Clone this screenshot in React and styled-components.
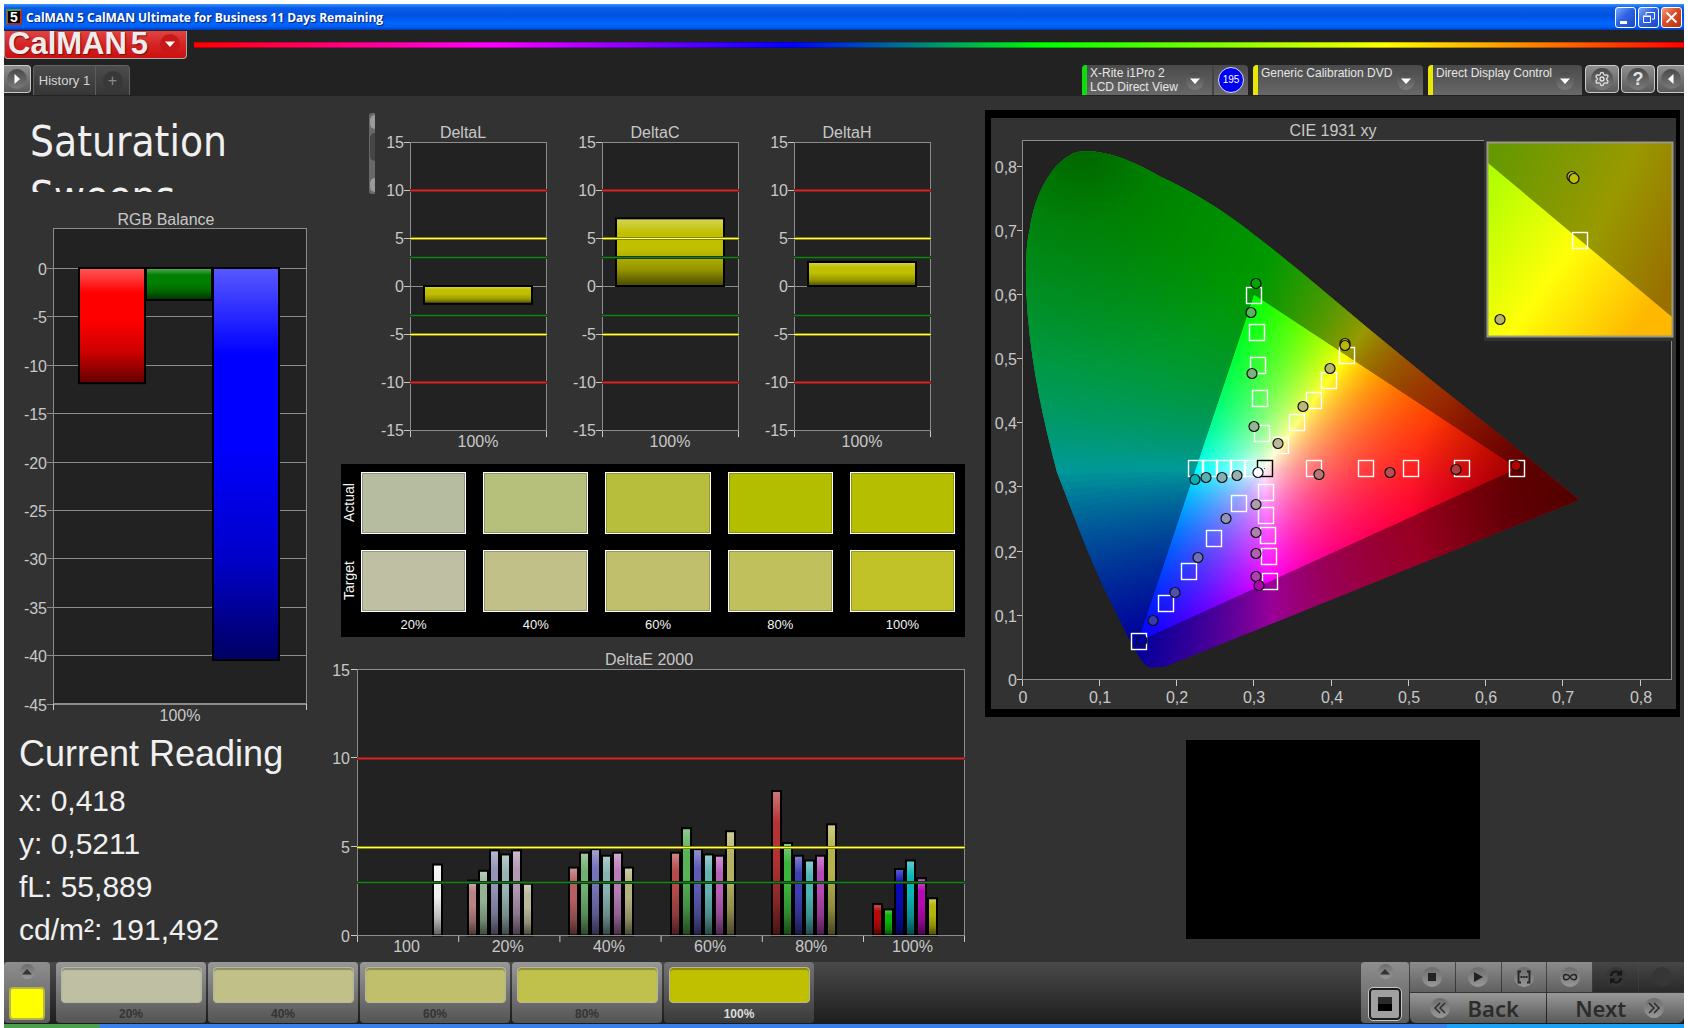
import React from "react";
import styled, { createGlobalStyle, css } from "styled-components";
import { Settings } from "lucide-react";

const GlobalStyle = createGlobalStyle`
  * {
    box-sizing: border-box;
  }
  body {
    margin: 0;
    background: #fff;
    color: #c8c8c8;
    font-family: "Liberation Sans", Arial, sans-serif;
    font-size: 16px;
  }
  button {
    font: inherit;
    color: inherit;
    border: 0;
    padding: 0;
    cursor: pointer;
  }
`;

const Window = styled.div`
  padding: 4px 4px 0;
`;

/* ---------- title bar ---------- */

const TitleBar = styled.header`
  display: flex;
  align-items: center;
  height: 26px;
  padding: 0 2px;
  background: linear-gradient(#3b94ff, #0a5ce8 15%, #0053e0 45%, #0066ff 75%, #0060f4 88%, #0038b8);
`;

const AppIcon = styled.span`
  width: 16px;
  height: 16px;
  margin-right: 4px;
  border: 2px solid;
  border-color: #4c9a4c #b02a2a #b02a2a #7a6a3a;
  background: #000;
  color: #fff;
  font-size: 14px;
  font-weight: 700;
  line-height: 12px;
  text-align: center;
`;

const WindowTitle = styled.h1`
  flex: 1;
  margin: 0;
  color: #fff;
  font-family: "Open Sans", "Noto Sans", sans-serif;
  font-size: 12px;
  font-weight: 700;
  text-shadow: 1px 1px 1px #0a1e7a;
`;

const WindowButtons = styled.div`
  display: flex;
  gap: 2px;
`;

const WindowButton = styled.button`
  display: flex;
  width: 21px;
  height: 21px;
  border: 1px solid #fff;
  border-radius: 3px;
  background: ${({ $close }) =>
    $close
      ? "linear-gradient(135deg, #f0a080, #dd4a22 45%, #b83010)"
      : "linear-gradient(135deg, #7ea6f6, #2e62e4 45%, #1a48c8)"};
`;

/* ---------- header ---------- */

const Header = styled.div`
  height: 66px;
  padding-top: 1px;
  background: #222;
`;

const BrandRow = styled.div`
  display: flex;
  height: 34px;
`;

const BrandButton = styled.button`
  display: flex;
  align-items: center;
  gap: 4px;
  width: 183px;
  height: 28px;
  padding: 0 6px 2px 3px;
  border: 1px solid #a8a8a8;
  border-top: 0;
  border-radius: 0 0 4px 4px;
  background: linear-gradient(#e04444, #d42424 50%, #cc1010);
  color: #ececec;
  font-size: 31px;
  font-weight: 700;
  line-height: 24px;
  text-shadow: 1px 1px 1px #7a0c0c;
`;

const Spectrum = styled.div`
  flex: 1;
  height: 6px;
  margin: 11px 0 0 7px;
  background: linear-gradient(#0006, transparent 20%, transparent 75%, #0007),
    linear-gradient(to right, #f00, #f0f 20%, #00f 40%, #0f0 57%, #ff0 80%, #f00);
`;

const TabRow = styled.div`
  display: flex;
  height: 31px;
`;

const iconPanel = css`
  border: 1px solid #c8c8c8;
  background: linear-gradient(#8e8e8e, #5a5a5a);
`;

const RoundIcon = styled.span`
  display: flex;
  align-items: center;
  justify-content: center;
  flex: none;
  width: ${({ $size = 20 }) => $size}px;
  height: ${({ $size = 20 }) => $size}px;
  margin-left: ${({ $push }) => ($push ? "auto" : "0")};
  border-radius: 50%;
  background: ${({ $tone = "linear-gradient(#4a4a4a, #7a7a7a)" }) => $tone};
`;

const SideButton = styled.button`
  ${iconPanel}
  display: flex;
  align-items: center;
  justify-content: center;
  width: 27px;
  height: 28px;
  border-left: ${({ $edge }) => ($edge === "left" ? 0 : "1px solid #c8c8c8")};
  border-right: ${({ $edge }) => ($edge === "right" ? 0 : "1px solid #c8c8c8")};
  border-radius: ${({ $edge }) => ($edge === "left" ? "0 4px 4px 0" : "4px 0 0 4px")};
`;

const ToolButton = styled.button`
  ${iconPanel}
  display: flex;
  align-items: center;
  justify-content: center;
  width: 34px;
  height: 28px;
  border-radius: 4px;
  color: #e4e4e4;
  font-size: 18px;
  font-weight: 700;
`;

const HistoryTabs = styled.div`
  display: flex;
  width: 97px;
  height: 30px;
  margin-left: 2px;
  border: 1px solid #626262;
  border-bottom: 0;
  border-radius: 4px 4px 0 0;
  background: linear-gradient(#4c4c4c, #363636);
`;

const HistoryTab = styled.button`
  width: 62px;
  border-right: 1px solid #5c5c5c;
  background: none;
  color: #d4d4d4;
  font-size: 13px;
`;

const AddTab = styled.button`
  display: flex;
  flex: 1;
  align-items: center;
  justify-content: center;
  background: none;
  color: #8a8a8a;
  font-size: 16px;
`;

const Devices = styled.div`
  display: flex;
  margin-left: auto;
  gap: 5px;
`;

const Tools = styled.div`
  display: flex;
  gap: 2px;
  margin-left: 3px;
`;

const Device = styled.div`
  display: flex;
  width: ${({ $width }) => $width}px;
  height: 30px;
  overflow: hidden;
  border-radius: 4px 4px 0 0;
  background: linear-gradient(#4a4a4a, #686868);
`;

const DeviceButton = styled.button`
  display: flex;
  flex: 1;
  align-items: flex-start;
  padding: 1px 0 0 3px;
  border-left: 5px solid ${({ $status }) => $status};
  background: none;
  color: #e6e6e6;
  font-size: 12px;
  line-height: 14px;
  text-align: left;
  white-space: nowrap;

  ${RoundIcon} {
    margin-top: 6px;
    margin-right: 8px;
  }
`;

const Countdown = styled.span`
  display: flex;
  align-items: center;
  justify-content: center;
  width: 36px;
  border-left: 2px solid #444;

  span {
    width: 26px;
    height: 26px;
    border: 1px solid #dcdcff;
    border-radius: 50%;
    background: #0000f4;
    color: #fff;
    font-size: 10px;
    line-height: 24px;
    text-align: center;
  }
`;

/* ---------- workspace ---------- */

const Workspace = styled.main`
  display: grid;
  grid-template-columns: 329fr 632fr 719fr;
  padding-bottom: 8px;
  background: #323232;
`;

const Column = styled.section`
  display: flex;
  flex-direction: column;
  min-width: 0;
`;

const CieColumn = styled(Column)`
  padding: 14px 4px 0 20px;
`;

const PageTitle = styled.h2`
  height: 96px;
  margin: 0 0 12px;
  padding: 18px 60px 0 26px;
  overflow: hidden;
  color: #f0f0f0;
  font-family: "DejaVu Sans Condensed", "Noto Sans", sans-serif;
  font-size: 42px;
  font-weight: 400;
  line-height: 55px;
`;

const Chart = styled.svg`
  display: block;
  width: 100%;
  height: auto;
  fill: #c8c8c8;
  font-size: 16px;
`;

const Reading = styled.div`
  padding: 2px 0 0 15px;
  color: #f0f0f0;
  font-size: 30px;
  line-height: 43px;

  h3 {
    margin: 0 0 3px;
    font-size: 36px;
    font-weight: 400;
    line-height: 44px;
  }
  p {
    margin: 0;
  }
`;

const DeltaRow = styled.div`
  display: flex;
  padding: 17px 29px 0 36px;
`;

const ScrollStub = styled.div`
  display: flex;
  flex-direction: column;
  justify-content: space-between;
  width: 6px;
  height: 81px;
  padding: 2px 0 2px 1px;
  border-radius: 3px 0 0 3px;
  background: #686868;

  i {
    height: 14px;
    border-radius: 6px 0 0 6px;
    background: #9a9a9a;
  }
  i:nth-child(2) {
    height: 28px;
    margin-bottom: 14px;
    background: #454545;
  }
`;

const DeltaCharts = styled.div`
  display: grid;
  flex: 1;
  grid-template-columns: repeat(3, 1fr);
  gap: 15px;
  padding-top: 7px;
`;

const SwatchTable = styled.table`
  display: block;
  margin: 12px 0 11px 8px;
  padding: 8px 0 0;
  border-spacing: 0;
  background: #000;
  color: #f4f4f4;

  thead,
  tbody {
    display: block;
  }
  tr {
    display: flex;
    margin-bottom: 16px;
  }
  tfoot {
    display: block;
    margin-top: -16px;
  }
  tfoot tr {
    height: 25px;
    margin: 0;
  }
  th,
  td {
    flex: 1;
    margin-right: 17px;
    padding: 0;
    font-size: 13px;
    font-weight: 400;
    line-height: 25px;
    text-align: center;
  }
  td:last-child,
  th:last-child {
    margin-right: 10px;
  }
`;

const RowHead = styled.th`
  && {
    flex: 0 0 20px;
    margin-right: 0;
    font-size: 14px;
    line-height: 16px;
    padding-left: 4px;
    writing-mode: vertical-rl;
    rotate: 180deg;
  }
`;

const Swatch = styled.td`
  height: 62px;
  border: 1px solid #fff;
  box-shadow: inset 0 0 0 1px #0003;
  background: ${({ $color }) => $color};
`;

const CiePanel = styled.div`
  border: solid #000;
  border-width: 8px 4px 8px 6px;
`;

const PatternPreview = styled.div`
  width: 294px;
  height: 199px;
  margin: 23px auto 0;
  background: #000;
`;

/* ---------- bottom bar ---------- */

const Dock = styled.footer`
  display: flex;
  height: 62px;
  border-bottom: 1px solid #1c1c1c;
  background: linear-gradient(#4a4a4a, #1e1e1e);
`;

const DockPanel = styled.div`
  display: flex;
  flex-direction: column;
  align-items: center;
  justify-content: space-between;
  width: ${({ $width }) => $width}px;
  padding: 2px 0 3px;
  border-radius: 4px;
  background: linear-gradient(#8e8e8e, #5c5c5c);
`;

const ColorWell = styled.button`
  width: 36px;
  height: 33px;
  border: 2px solid #b4b44a;
  border-radius: 4px;
  background: #ff0;
`;

const Levels = styled.div`
  display: flex;
  gap: 2px;
  margin-left: 6px;
`;

const Level = styled.button`
  display: flex;
  flex-direction: column;
  align-items: center;
  gap: 2px;
  width: 150px;
  padding-top: 5px;
  border-radius: 4px;
  background: ${({ $active }) =>
    $active ? "linear-gradient(#747474, #3a3a3a)" : "linear-gradient(#989898, #545454)"};
  color: ${({ $active }) => ($active ? "#dcdcdc" : "#343434")};
  font-size: 12px;
  font-weight: 700;
  line-height: 18px;
`;

const LevelColor = styled.span`
  width: 141px;
  height: 37px;
  border: 1px solid #b8b8a0;
  border-radius: 4px;
  box-shadow: inset 0 2px 1px #0004;
  background: ${({ $color }) => $color};
`;

const Transport = styled.div`
  display: flex;
  gap: 1px;
  margin: 0 0 0 auto;
`;

const TransportKeys = styled.div`
  display: grid;
  grid-template-columns: repeat(6, 1fr);
  grid-template-rows: 30px 30px;
  gap: 1px;
  width: 274px;
`;

const Key = styled.button`
  display: flex;
  align-items: center;
  justify-content: center;
  background: ${({ $off }) =>
    $off ? "linear-gradient(#464646, #2a2a2a)" : "linear-gradient(#8c8c8c, #606060)"};
`;

const NavKey = styled(Key)`
  grid-column: span 3;
  gap: 18px;
  padding: ${({ $next }) => ($next ? "0 0 0 8px" : "0 8px 0 0")};
  border-radius: ${({ $next }) => ($next ? "0 0 6px 0" : "0 0 0 6px")};
  background: linear-gradient(#989898, #585858);
  color: #2c2c2c;
  font-family: "Noto Sans", "Open Sans", sans-serif;
  font-size: 22px;
  font-weight: 600;
`;

const StopFrame = styled.button`
  display: flex;
  align-items: center;
  justify-content: center;
  width: 32px;
  height: 32px;
  border: 2px solid #1c1c1c;
  border-radius: 4px;
  outline: 1px solid #c4c4c4;
  background: #a0a0a0;

  &::before {
    content: "";
    width: 14px;
    height: 14px;
    background: linear-gradient(#2a2a2a 50%, #000 50%);
  }
`;

const Taskbar = styled.div`
  display: flex;
  height: 4px;
  background: linear-gradient(to right, #3a80ec 1443px, #1aa0f4 1443px);

  &::before {
    content: "";
    width: 96px;
    border-radius: 0 4px 0 0;
    background: #4ca04c;
  }
`;

/* ---------- charts ---------- */

const ShadeDefs = ({ id }) => (
  <defs>
    <linearGradient id={id} x1="0" y1="0" x2="0" y2="1">
      <stop offset="0" stopColor="#fff" stopOpacity="0.35" />
      <stop offset="0.22" stopColor="#fff" stopOpacity="0" />
      <stop offset="0.45" stopColor="#000" stopOpacity="0" />
      <stop offset="0.75" stopColor="#000" stopOpacity="0.22" />
      <stop offset="1" stopColor="#000" stopOpacity="0.62" />
    </linearGradient>
  </defs>
);

const Bar = ({ shade, color, ...rect }) => (
  <g>
    <rect {...rect} fill={color} />
    <rect {...rect} fill={`url(#${shade})`} stroke="#000" strokeWidth="2" />
  </g>
);

const Threshold = ({ x1, x2, y, color, edge }) => (
  <g shapeRendering="crispEdges">
    <rect x={x1} y={y - 1} width={x2 - x1} height="3" fill={edge} />
    <rect x={x1} y={y} width={x2 - x1} height="1" fill={color} />
  </g>
);

const LIMITS = [
  { value: 10, color: "#c43030", edge: "#8c1a1a" },
  { value: 5, color: "#ffff50", edge: "#84840c" },
  { value: 3, color: "#1e7a1e", edge: "#124012" },
];

const RGB_BARS = [
  { name: "R", value: -11.9, color: "#ff0000" },
  { name: "G", value: -3.3, color: "#008000" },
  { name: "B", value: -40.5, color: "#0000ff" },
];

const RgbBalance = () => {
  const unit = 9.68;
  const y = (v) => 64 - v * unit;
  const steps = [0, -5, -10, -15, -20, -25, -30, -35, -40, -45];
  return (
    <Chart viewBox="0 0 329 526" role="img" aria-label="RGB Balance">
      <ShadeDefs id="shade-rgb" />
      <text x="162" y="21" textAnchor="middle">RGB Balance</text>
      <rect x="49.5" y="24.5" width="253" height="475" fill="#222" stroke="#8c8c8c" />
      {steps.map((v) => (
        <g key={v}>
          <path d={`M43 ${Math.round(y(v)) + 0.5}H303`} stroke="#8c8c8c" />
          <text x="43" y={Math.round(y(v)) + 7} textAnchor="end">{v}</text>
        </g>
      ))}
      {RGB_BARS.map((bar, i) => (
        <Bar
          key={bar.name}
          shade="shade-rgb"
          color={bar.color}
          x={75 + i * 67}
          y={y(0)}
          width="66"
          height={-bar.value * unit}
        />
      ))}
      <path d="M49.5 500v6M302.5 500v6" stroke="#c8c8c8" />
      <text x="176" y="517" textAnchor="middle">100%</text>
    </Chart>
  );
};

const DeltaChart = ({ title, value }) => {
  const y = (v) => 166 - v * 9.6;
  const shade = `shade-${title}`;
  return (
    <Chart viewBox="0 0 177 332" role="img" aria-label={title}>
      <ShadeDefs id={shade} />
      <text x="88" y="18" textAnchor="middle">{title}</text>
      <rect x="35.5" y="22.5" width="136" height="288" fill="#222" stroke="#8c8c8c" />
      {[15, 10, 5, 0, -5, -10, -15].map((v) => (
        <g key={v}>
          <path d={`M29 ${y(v) + 0.5}h6`} stroke="#c8c8c8" />
          <text x="29" y={y(v) + 6} textAnchor="end">{v}</text>
        </g>
      ))}
      <path d="M36 166.5H171" stroke="#8c8c8c" />
      <Bar
        shade={shade}
        color="#c0c000"
        x="49"
        y={value > 0 ? y(value) : y(0)}
        width="108"
        height={Math.abs(value) * 9.6}
      />
      {LIMITS.flatMap((limit) => [1, -1].map((sign) => (
        <Threshold
          key={limit.value * sign}
          x1={35}
          x2={172}
          y={Math.round(y(limit.value * sign))}
          color={limit.color}
          edge={limit.edge}
        />
      )))}
      <path d="M35.5 311v6M171.5 311v6" stroke="#c8c8c8" />
      <text x="103" y="327" textAnchor="middle">100%</text>
    </Chart>
  );
};

const DELTA_E = [
  { label: "100", bars: [[6, 4, "#f0f0f0"]] },
  {
    label: "20%",
    bars: [[0, 3.1, "#b98383"], [1, 3.65, "#94b394"], [2, 4.8, "#9494b9"], [3, 4.57, "#98b3b3"], [4, 4.8, "#b398b3"], [5, 2.92, "#b9b79a"]],
  },
  {
    label: "40%",
    bars: [[0, 3.83, "#b46060"], [1, 4.67, "#70b070"], [2, 4.87, "#7474b8"], [3, 4.5, "#86b2b2"], [4, 4.67, "#b87cb8"], [5, 3.83, "#b5b37c"]],
  },
  {
    label: "60%",
    bars: [[0, 4.67, "#b44a4a"], [1, 6.05, "#56b456"], [2, 4.87, "#5c5cb8"], [3, 4.57, "#62b2b2"], [4, 4.5, "#b860b8"], [5, 5.88, "#b5b362"]],
  },
  {
    label: "80%",
    bars: [[0, 8.15, "#b43232"], [1, 5.22, "#3cb43c"], [2, 4.5, "#3e3eb4"], [3, 4.23, "#4cb4b4"], [4, 4.5, "#b448b4"], [5, 6.27, "#b5b34c"]],
  },
  {
    label: "100%",
    bars: [[0, 1.77, "#b40a0a"], [1, 1.47, "#0ab40a"], [2, 3.75, "#0a0ab4"], [3, 4.23, "#0ab4b4"], [4, 3.23, "#b40ab4"], [5, 2.1, "#b4b40a"]],
  },
];

const DeltaE = () => {
  const y = (v) => 287.5 - v * 17.73;
  const groupX = (i) => 24.5 + i * 101.2;
  return (
    <Chart viewBox="0 0 632 306" role="img" aria-label="DeltaE 2000">
      <ShadeDefs id="shade-de" />
      <text x="316" y="17" textAnchor="middle">DeltaE 2000</text>
      <rect x="24.5" y="21.5" width="607" height="266" fill="#222" stroke="#8c8c8c" />
      {[15, 10, 5, 0].map((v) => (
        <g key={v}>
          <path d={`M18 ${Math.round(y(v)) - 0.5}h6`} stroke="#c8c8c8" />
          <text x="17" y={Math.round(y(v)) + 6} textAnchor="end">{v}</text>
        </g>
      ))}
      {DELTA_E.map((group, i) => (
        <g key={group.label}>
          {group.bars.map(([slot, value, color]) => (
            <Bar
              key={slot}
              shade="shade-de"
              color={color}
              x={Math.round(groupX(i) + 9.5 + slot * 11)}
              y={y(value)}
              width="9"
              height={value * 17.73}
            />
          ))}
          <path d={`M${groupX(i)} 288v6`} stroke="#c8c8c8" />
          <text x={groupX(i) + 49} y="304" textAnchor="middle">{group.label}</text>
        </g>
      ))}
      <path d="M24 287.5h608" stroke="#8c8c8c" />
      <path d="M631.5 288v6" stroke="#c8c8c8" />
      {LIMITS.map((limit) => (
        <Threshold key={limit.value} x1={24} x2={632} y={Math.round(y(limit.value))} color={limit.color} edge={limit.edge} />
      ))}
    </Chart>
  );
};

/* ---------- CIE diagram ---------- */

const toPx = ([x, y]) => [31.5 + x * 772.6, 561.7 - y * 640.9];
const mix = (a, b, t) => [a[0] + (b[0] - a[0]) * t, a[1] + (b[1] - a[1]) * t];

const WHITE = [0.3127, 0.329];
const RED = [0.64, 0.33];
const GREEN = [0.3, 0.6];
const BLUE = [0.15, 0.06];

// brightest linear RGB colour of a chromaticity, clipped to the gamut
const colorAt = ([x, yRaw], shade = 1) => {
  const y = Math.max(yRaw, 0.01);
  const X = x / y;
  const Z = (1 - x - y) / y;
  const linear = [
    3.2406 * X - 1.5372 - 0.4986 * Z,
    -0.9689 * X + 1.8758 + 0.0415 * Z,
    0.0557 * X - 0.204 + 1.057 * Z,
  ].map((v) => Math.max(v, 0));
  const top = Math.max(...linear);
  const [r, g, b] = linear.map((v) => Math.round((255 * shade * v) / top));
  return `rgb(${r},${g},${b})`;
};

const STEPS = 130;
const REACH = 12;
const INNER_STOPS = [0, 0.08, 0.16, 0.26, 0.38, 0.5, 0.64, 0.8, 1];
const OUTER_STOPS = [1, 1.15, 1.3, 1.5, 1.75, 2, 2.4, 3, 4, 5, 7, 9, 12];

const wedges = [[RED, GREEN], [GREEN, BLUE], [BLUE, RED]].flatMap(([from, to], edge) => {
  const white = toPx(WHITE);
  const [wx, wy] = white;
  const [ax, ay] = toPx(from);
  const [bx, by] = toPx(to);
  const t = ((wx - ax) * (bx - ax) + (wy - ay) * (by - ay)) / ((bx - ax) ** 2 + (by - ay) ** 2);
  const foot = [ax + (bx - ax) * t, ay + (by - ay) * t];
  return Array.from({ length: STEPS }, (_, i) => {
    const middle = mix(from, to, (i + 0.5) / STEPS);
    const p = toPx(mix(from, to, i / STEPS));
    const q = toPx(mix(from, to, (i + 3) / STEPS));
    const shape = (reach) =>
      [white, mix(white, p, reach), mix(white, q, reach)].map((pt) => pt.map((n) => n.toFixed(2)).join(",")).join(" ");
    return {
      id: `wedge-${edge}-${i}`,
      foot,
      farFoot: mix(white, foot, REACH),
      inner: shape(1.02),
      outer: shape(REACH),
      stops: INNER_STOPS.map((s) => [s, colorAt(mix(WHITE, middle, s))]),
      farStops: OUTER_STOPS.map((s) => [s / REACH, colorAt(mix(WHITE, middle, s), 0.6)]),
    };
  });
});

const LOCUS =
  "M86 34 C94 33 104 33 112 35 C133 39 152 49 170 59 C194 70 218 84 242 101 C282 130 322 164 373 207 L440 262 L503 312 L588 382 L175 548 Q166 550 158 549 C150 546 138 521 120 484 C100 445 82 395 66 354 C52 300 42 255 37 200 C34 160 34 130 39 110 C44 75 62 42 86 34Z";

const GAMUT = [RED, GREEN, BLUE].map((p) => toPx(p).join(",")).join(" ");

const TARGETS = [
  [263, 177], [266, 214], [267, 247], [269, 280], [271, 315],
  [356, 237], [338, 262], [323, 282], [306, 304], [290, 327],
  [205, 350], [219, 350], [233, 350], [247, 350], [261, 350],
  [323, 350], [375, 350], [420, 350], [471, 350], [526, 350],
  [275, 374], [275, 397], [277, 417], [278, 438], [279, 463],
  [248, 385], [223, 420], [198, 453], [175, 485], [148, 523],
];

const READINGS = [
  [265, 165, "#00a800"], [260, 194, "#5ab45a"], [261, 255, "#7cb07c"], [263, 308, "#94b494"],
  [354, 225, "#b4b43c"], [354, 227, "#b8b800"], [339, 250, "#b8b46c"], [312, 288, "#bcb87c"], [287, 325, "#bcb89a"],
  [204, 361, "#00b4b4"], [215, 359, "#56b0b0"], [231, 359, "#86b0b0"], [246, 357, "#98b0b0"], [267, 354, "#ffffff"],
  [328, 356, "#b47878"], [399, 354, "#b45050"], [465, 351, "#b43c3c"], [525, 347, "#b40000"],
  [265, 386, "#b09ab0"], [265, 414, "#b080b0"], [265, 435, "#b060b0"], [265, 458, "#b040b0"], [268, 467, "#b400b4"],
  [235, 400, "#9494b8"], [207, 439, "#7070b8"], [184, 474, "#5050b0"], [162, 502, "#3838b0"], [151, 522, "#0000a8"],
];

const Target = ({ at: [x, y], color = "#fff" }) => (
  <rect x={x - 7.5} y={y - 7.5} width="15" height="16" fill="none" stroke={color} strokeWidth="1.4" />
);

const Measured = ({ at: [x, y, color] }) => (
  <circle cx={x} cy={y + 0.5} r="5" fill={color} stroke="#111" strokeWidth="1.2" />
);

const RayGradient = ({ id, end, stops }) => (
  <linearGradient
    id={id}
    gradientUnits="userSpaceOnUse"
    x1={toPx(WHITE)[0]}
    y1={toPx(WHITE)[1]}
    x2={end[0]}
    y2={end[1]}
  >
    {stops.map(([offset, color]) => <stop key={offset} offset={offset} stopColor={color} />)}
  </linearGradient>
);

const Cie = () => (
  <Chart viewBox="0 0 685 591" role="img" aria-label="CIE 1931 xy">
    <defs>
      <clipPath id="locus"><path d={LOCUS} /></clipPath>
      <clipPath id="gamut"><polygon points={GAMUT} /></clipPath>
      <clipPath id="inset"><rect x="497" y="25" width="184" height="193" /></clipPath>
      {wedges.map((w) => (
        <React.Fragment key={w.id}>
          <RayGradient id={w.id} end={w.foot} stops={w.stops} />
          <RayGradient id={`${w.id}-far`} end={w.farFoot} stops={w.farStops} />
        </React.Fragment>
      ))}
      <radialGradient id="dim-red" gradientUnits="userSpaceOnUse" cx="588" cy="382" r="170">
        <stop offset="0" stopOpacity="0.47" />
        <stop offset="0.41" stopOpacity="0.37" />
        <stop offset="0.7" stopOpacity="0.18" />
        <stop offset="1" stopOpacity="0" />
      </radialGradient>
      <radialGradient id="dim-green" gradientUnits="userSpaceOnUse" cx="90" cy="30" r="220">
        <stop offset="0" stopOpacity="0.34" />
        <stop offset="0.35" stopOpacity="0.16" />
        <stop offset="1" stopOpacity="0" />
      </radialGradient>
      <linearGradient id="inset-in" gradientUnits="userSpaceOnUse" x1="486" y1="80" x2="652" y2="200">
        <stop offset="0" stopColor="#b0ff00" />
        <stop offset="0.52" stopColor="#ffff08" />
        <stop offset="1" stopColor="#ffb800" />
      </linearGradient>
      <linearGradient id="inset-out" gradientUnits="userSpaceOnUse" x1="500" y1="50" x2="690" y2="140">
        <stop offset="0" stopColor="#669900" />
        <stop offset="0.58" stopColor="#999900" />
        <stop offset="1" stopColor="#997000" />
      </linearGradient>
    </defs>
    <text x="342" y="18" textAnchor="middle">CIE 1931 xy</text>
    <rect x="31.5" y="22.5" width="649" height="539" fill="#222" stroke="#8c8c8c" />
    {[0, 1, 2, 3, 4, 5, 6, 7, 8].map((n) => {
      const [x, y] = toPx([n / 10, n / 10]).map(Math.round);
      const label = n ? `0,${n}` : "0";
      return (
        <g key={n}>
          <path d={`M26 ${y - 0.5}h5M${x - 0.5} 562v6`} stroke="#c8c8c8" />
          <text x="26" y={y + 6} textAnchor="end">{label}</text>
          <text x={x} y="585" textAnchor="middle">{label}</text>
        </g>
      );
    })}
    <g clipPath="url(#locus)">
      {wedges.map((w) => <polygon key={w.id} points={w.outer} fill={`url(#${w.id}-far)`} />)}
      <g clipPath="url(#gamut)">
        {wedges.map((w) => <polygon key={w.id} points={w.inner} fill={`url(#${w.id})`} />)}
      </g>
      <rect width="685" height="591" fill="url(#dim-red)" />
      <rect width="685" height="591" fill="url(#dim-green)" />
    </g>
    {TARGETS.map((t) => <Target key={t.join()} at={t} />)}
    <Target at={[274, 350]} color="#000" />
    {READINGS.map((r) => <Measured key={r.join()} at={r} />)}

    <rect x="493" y="21" width="190" height="202" fill="#323232" />
    <rect x="497" y="25" width="184" height="193" fill="url(#inset-out)" />
    <path d="M497 45L681 199V218H497Z" fill="url(#inset-in)" clipPath="url(#inset)" />
    <rect x="496.5" y="24.5" width="185" height="194" fill="none" stroke="#9a9a84" strokeWidth="2" />
    <Target at={[589, 122]} />
    <Measured at={[581, 58, "#b4b43c"]} />
    <Measured at={[583, 60, "#c0c000"]} />
    <Measured at={[509, 201, "#b8b46c"]} />
  </Chart>
);

/* ---------- icons ---------- */

const Glyph = styled.svg`
  display: block;
  fill: none;
  stroke: currentColor;
`;

const Caret = ({ turn = 0, color = "#fff" }) => (
  <Glyph width="12" height="12" viewBox="0 0 12 12">
    <path d="M1 3.5h10L6 9z" fill={color} stroke="none" transform={`rotate(${turn} 6 6)`} />
  </Glyph>
);

const KEYS = [
  { name: "Stop", icon: <rect x="4" y="4" width="8" height="8" fill="#222" stroke="none" /> },
  { name: "Play", icon: <path d="M4 3l9 5-9 5z" fill="#222" stroke="none" /> },
  { name: "Read series", icon: <path d="M5 2.5H2.500v11H5M11 2.500h2.500v11H11M4.500 8h2M7.200 8h1.600M9.500 8h2" strokeWidth="1.8" /> },
  { name: "Read continuous", icon: <path d="M8 8C6 4.500 1.500 4.500 1.500 8S6 11.500 8 8s6.500-3.500 6.500 0S10 11.500 8 8z" strokeWidth="1.5" /> },
  { name: "Repeat", off: true, icon: <path d="M3 7a5 5 0 0 1 9-2.500M13 1.500v4H9M13 9a5 5 0 0 1-9 2.500M3 14.500v-4h4" stroke="#161616" strokeWidth="2" /> },
  { name: "Record", off: true, icon: null },
];

const LEVELS = [
  ["20%", "#bfbfa4"],
  ["40%", "#c0c088"],
  ["60%", "#bfbf6c"],
  ["80%", "#c0c04c"],
  ["100%", "#c0c000"],
];

const SWATCHES = {
  Actual: ["#b6bca0", "#b6c07a", "#b6be3c", "#b4be00", "#b6be00"],
  Target: ["#bfbfa4", "#c0c088", "#bfbf6c", "#c0c05c", "#c0c228"],
};

const keyTone = "linear-gradient(#6c6c6c, #989898)";

const App = () => {
  return (
    <Window>
      <GlobalStyle />
      <TitleBar>
        <AppIcon>5</AppIcon>
        <WindowTitle>CalMAN 5 CalMAN Ultimate for Business 11 Days Remaining</WindowTitle>
        <WindowButtons>
          <WindowButton aria-label="Minimize">
            <Glyph width="19" height="19"><path d="M4 14.500h7" stroke="#fff" strokeWidth="3" /></Glyph>
          </WindowButton>
          <WindowButton aria-label="Restore">
            <Glyph width="19" height="19" stroke="#fff">
              <path d="M7 7V4.500h8.500V11H13M7 4.500h8.500M4.500 8.500h7v6h-7zM4 8h8" stroke="#fff" />
            </Glyph>
          </WindowButton>
          <WindowButton $close aria-label="Close">
            <Glyph width="19" height="19"><path d="M4.500 4.500l10 10M14.500 4.500l-10 10" stroke="#fff" strokeWidth="2" /></Glyph>
          </WindowButton>
        </WindowButtons>
      </TitleBar>

      <Header>
        <BrandRow>
          <BrandButton>
            <span>CalMAN</span>
            <span>5</span>
            <RoundIcon $push $tone="#c81818"><Caret /></RoundIcon>
          </BrandButton>
          <Spectrum />
        </BrandRow>
        <TabRow>
          <SideButton $edge="left" aria-label="Show left panel">
            <RoundIcon><Caret turn={-90} /></RoundIcon>
          </SideButton>
          <HistoryTabs>
            <HistoryTab>History 1</HistoryTab>
            <AddTab aria-label="Add history">
              <RoundIcon $tone="#383838">+</RoundIcon>
            </AddTab>
          </HistoryTabs>
          <Devices>
            <Device $width={166}>
              <DeviceButton $status="#0fdc0f">
                <span>X-Rite i1Pro 2<br />LCD Direct View</span>
                <RoundIcon $push $size={18}><Caret /></RoundIcon>
              </DeviceButton>
              <Countdown><span>195</span></Countdown>
            </Device>
            <Device $width={170}>
              <DeviceButton $status="#e8e800">
                <span>Generic Calibration DVD</span>
                <RoundIcon $push $size={18}><Caret /></RoundIcon>
              </DeviceButton>
            </Device>
            <Device $width={154}>
              <DeviceButton $status="#e8e800">
                <span>Direct Display Control</span>
                <RoundIcon $push $size={18}><Caret /></RoundIcon>
              </DeviceButton>
            </Device>
          </Devices>
          <Tools>
            <ToolButton aria-label="Settings">
              <RoundIcon $size={22}><Settings size={16} /></RoundIcon>
            </ToolButton>
            <ToolButton aria-label="Help"><RoundIcon $size={22}>?</RoundIcon></ToolButton>
            <SideButton $edge="right" aria-label="Show right panel">
              <RoundIcon><Caret turn={90} /></RoundIcon>
            </SideButton>
          </Tools>
        </TabRow>
      </Header>

      <Workspace>
        <Column>
          <PageTitle>Saturation Sweeps</PageTitle>
          <RgbBalance />
          <Reading>
            <h3>Current Reading</h3>
            <p>x: 0,418</p>
            <p>y: 0,5211</p>
            <p>fL: 55,889</p>
            <p>cd/m²: 191,492</p>
          </Reading>
        </Column>

        <Column>
          <DeltaRow>
            <ScrollStub><i /><i /><i /></ScrollStub>
            <DeltaCharts>
              <DeltaChart title="DeltaL" value={-1.85} />
              <DeltaChart title="DeltaC" value={7.05} />
              <DeltaChart title="DeltaH" value={2.5} />
            </DeltaCharts>
          </DeltaRow>
          <SwatchTable>
            <tbody>
              {Object.entries(SWATCHES).map(([name, colors]) => (
                <tr key={name}>
                  <RowHead scope="row">{name}</RowHead>
                  {colors.map((color) => <Swatch key={color} $color={color} />)}
                </tr>
              ))}
            </tbody>
            <tfoot>
              <tr>
                <RowHead as="td" />
                {LEVELS.map(([label]) => <th key={label} scope="col">{label}</th>)}
              </tr>
            </tfoot>
          </SwatchTable>
          <DeltaE />
        </Column>

        <CieColumn>
          <CiePanel><Cie /></CiePanel>
          <PatternPreview />
        </CieColumn>
      </Workspace>

      <Dock>
        <DockPanel $width={46}>
          <RoundIcon $size={15} $tone={keyTone}><Caret turn={180} color="#333" /></RoundIcon>
          <ColorWell aria-label="Current color" />
        </DockPanel>
        <Levels>
          {LEVELS.map(([label, color]) => (
            <Level key={label} $active={label === "100%"}>
              <LevelColor $color={color} />
              {label}
            </Level>
          ))}
        </Levels>
        <Transport>
          <DockPanel $width={48}>
            <RoundIcon $size={15} $tone={keyTone}><Caret turn={180} color="#333" /></RoundIcon>
            <StopFrame aria-label="Pattern" />
          </DockPanel>
          <TransportKeys>
            {KEYS.map((key) => (
              <Key key={key.name} $off={key.off} aria-label={key.name}>
                <RoundIcon $tone={key.off ? "#363636" : keyTone}>
                  <Glyph width="16" height="16" viewBox="0 0 16 16" color="#222">{key.icon}</Glyph>
                </RoundIcon>
              </Key>
            ))}
            <NavKey>
              <RoundIcon $tone={keyTone}>
                <Glyph width="16" height="16" viewBox="0 0 16 16"><path d="M8 3L3 8l5 5M13 3L8 8l5 5" strokeWidth="1.5" /></Glyph>
              </RoundIcon>
              Back
            </NavKey>
            <NavKey $next>
              Next
              <RoundIcon $tone={keyTone}>
                <Glyph width="16" height="16" viewBox="0 0 16 16"><path d="M3 3l5 5-5 5M8 3l5 5-5 5" strokeWidth="1.5" /></Glyph>
              </RoundIcon>
            </NavKey>
          </TransportKeys>
        </Transport>
      </Dock>
      <Taskbar />
    </Window>
  );
};

export default App;
